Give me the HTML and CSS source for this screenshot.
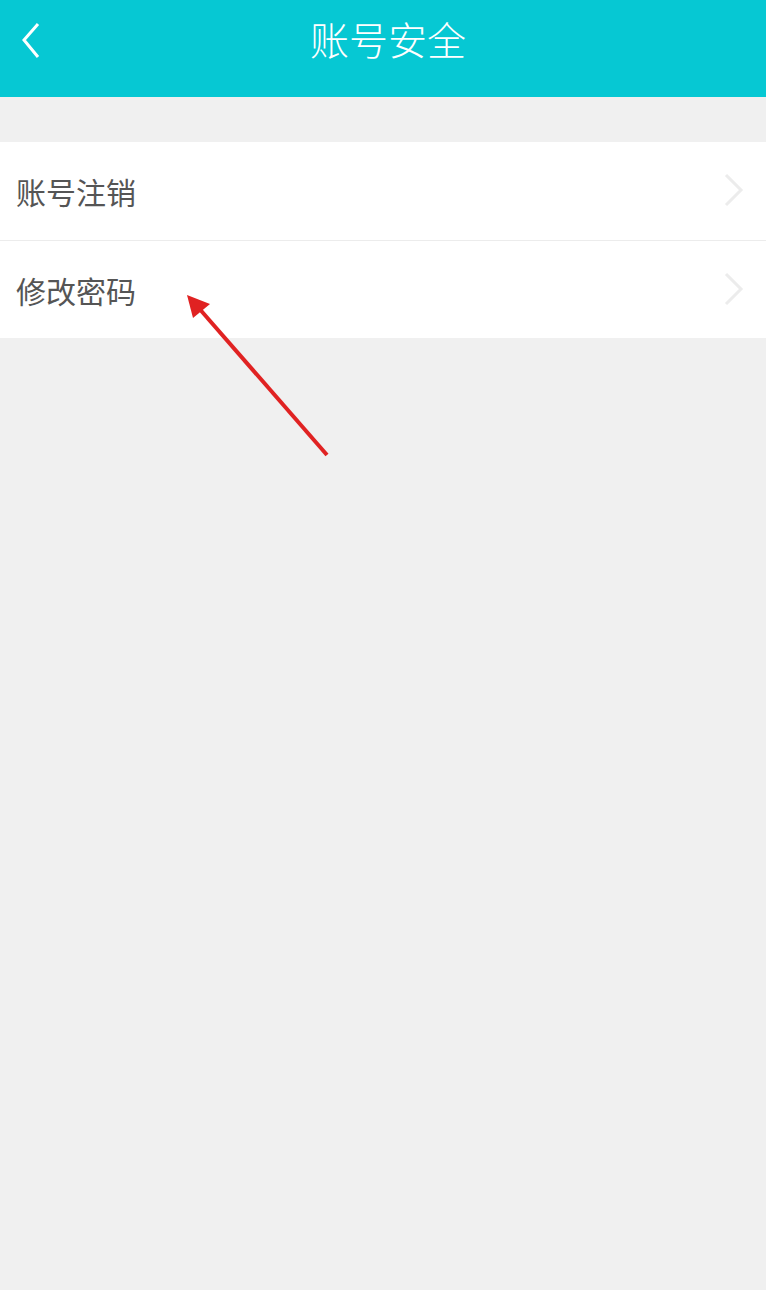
FILE: index.html
```html
<!DOCTYPE html>
<html lang="zh">
<head>
<meta charset="utf-8">
<title>账号安全</title>
<link rel="stylesheet" href="styles.css">
</head>
<body>
<div class="page">
  <header class="topbar">
    <svg class="back" width="24" height="40" viewBox="0 0 24 40"><polyline points="18,4 4,20 18,37" fill="none" stroke="#fff" stroke-width="3"/></svg>
    <h1 class="title">账号安全</h1>
  </header>
  <div class="list">
    <div class="row">
      <span class="label">账号注销</span>
      <svg class="chev" width="26" height="40" viewBox="0 0 26 40"><polyline points="5,3 20,18 5,33" fill="none" stroke="#ececec" stroke-width="3"/></svg>
    </div>
    <div class="row">
      <span class="label">修改密码</span>
      <svg class="chev" width="26" height="40" viewBox="0 0 26 40"><polyline points="5,3 20,18 5,33" fill="none" stroke="#ececec" stroke-width="3"/></svg>
    </div>
  </div>
  <svg class="arrow" width="766" height="1290" viewBox="0 0 766 1290">
    <line x1="327" y1="455" x2="197" y2="306" stroke="#e02222" stroke-width="4"/>
    <polygon points="187,295 193,318 210,304" fill="#e02222"/>
  </svg>
</div>
</body>
</html>
```
FILE: styles.css
```css
html, body {
  margin: 0;
  padding: 0;
  background: #f0f0f0;
}
.page {
  position: relative;
  width: 766px;
  height: 1290px;
  background: #f0f0f0;
  font-family: "Noto Sans CJK SC", "Noto Sans", sans-serif;
  overflow: hidden;
}
.topbar {
  height: 97px;
  background: #06c8d3;
  display: flex;
  align-items: flex-start;
  justify-content: center;
  position: relative;
}
.back {
  position: absolute;
  left: 20px;
  top: 20px;
}
.title {
  margin: 12px 0 0 10px;
  color: #fff;
  font-size: 39px;
  font-weight: 300;
  line-height: 52px;
}
.list {
  margin-top: 45px;
  background: #fff;
}
.row {
  height: 98px;
  display: flex;
  align-items: center;
  justify-content: space-between;
  padding: 0 19px 0 16px;
}
.row + .row {
  border-top: 1px solid #ececec;
  height: 97px;
}
.label {
  font-size: 30px;
  color: #555;
  line-height: 40px;
}
.chev {
  margin-top: 2px;
}
.arrow {
  position: absolute;
  left: 0;
  top: 0;
  pointer-events: none;
}
```
